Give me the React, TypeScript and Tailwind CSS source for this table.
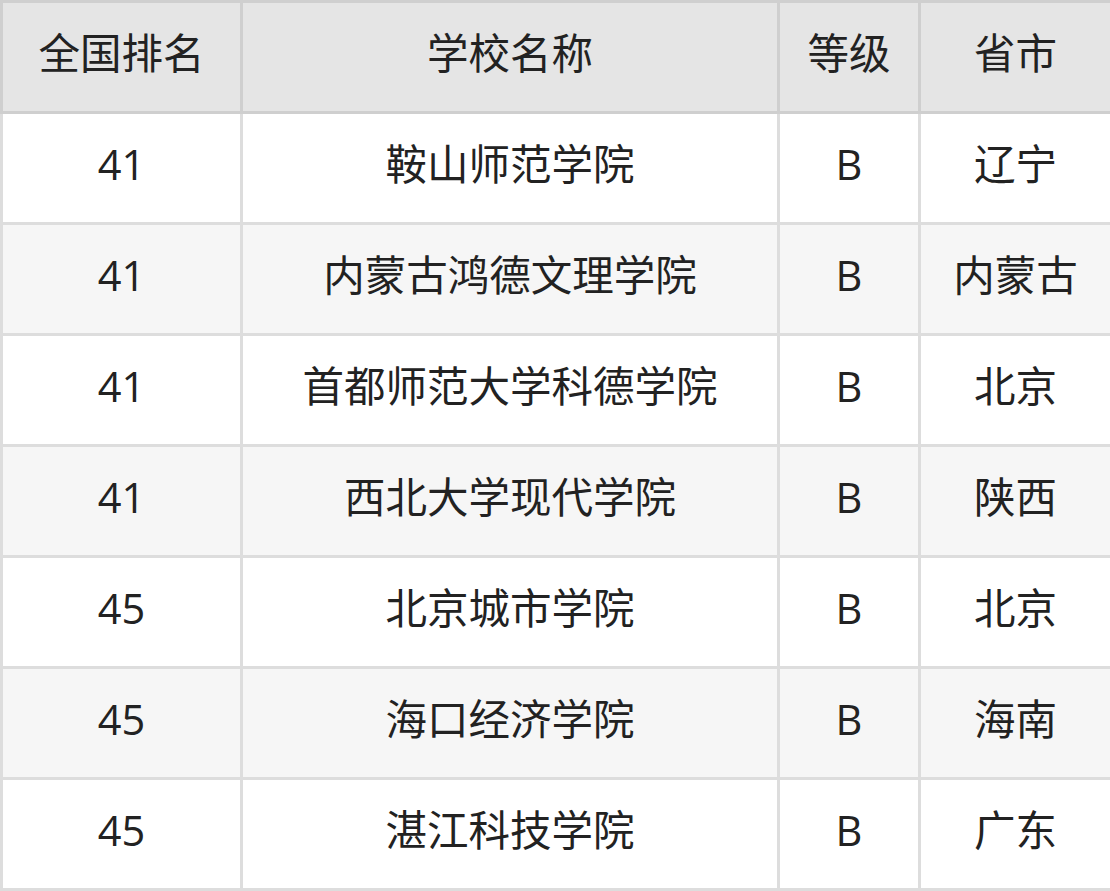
import React from "react";

const rows = [
  ["41", "鞍山师范学院", "B", "辽宁"],
  ["41", "内蒙古鸿德文理学院", "B", "内蒙古"],
  ["41", "首都师范大学科德学院", "B", "北京"],
  ["41", "西北大学现代学院", "B", "陕西"],
  ["45", "北京城市学院", "B", "北京"],
  ["45", "海口经济学院", "B", "海南"],
  ["45", "湛江科技学院", "B", "广东"],
];

export default function App() {
  return (
    <div
      className="w-[1110px] h-[891px] bg-white text-[#222222]"
      style={{ fontFamily: '"Open Sans", "Noto Sans CJK SC", sans-serif' }}
    >
      <table className="border-collapse w-[1110px] table-fixed text-[41.5px] leading-none">
        <colgroup>
          <col className="w-[240px]" />
          <col className="w-[537px]" />
          <col className="w-[141px]" />
          <col className="w-[192px]" />
        </colgroup>
        <thead>
          <tr className="bg-[#e5e5e5]">
            {["全国排名", "学校名称", "等级", "省市"].map((h) => (
              <th
                key={h}
                className="border-[3px] border-[#cfcfcf] h-[111px] font-normal text-center align-middle p-0 pb-[6px]"
              >
                {h}
              </th>
            ))}
          </tr>
        </thead>
        <tbody>
          {rows.map((r, i) => (
            <tr key={i} className={i % 2 === 1 ? "bg-[#f6f6f6]" : "bg-white"}>
              {r.map((c, j) => (
                <td
                  key={j}
                  className="border-[3px] border-[#dddddd] h-[111px] text-center align-middle p-0 pb-[6px]"
                >
                  {c}
                </td>
              ))}
            </tr>
          ))}
        </tbody>
      </table>
    </div>
  );
}
